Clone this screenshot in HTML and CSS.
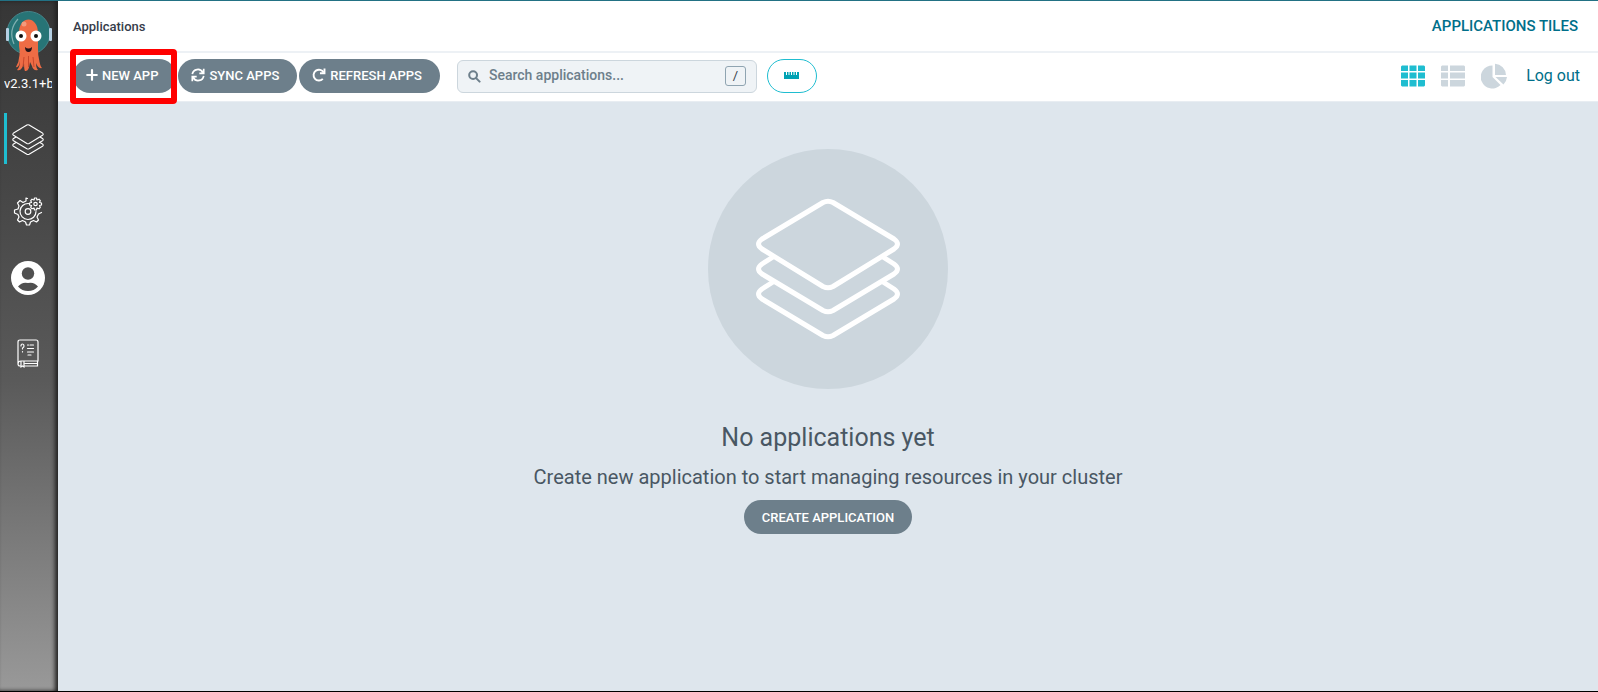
FILE: index.html
```html
<!DOCTYPE html>
<html lang="en">
<head>
<meta charset="utf-8">
<title>Applications</title>
<link rel="stylesheet" href="styles.css">
</head>
<body>
<div class="app">
  <nav class="sidebar" aria-label="Main">
    <svg class="logo" viewBox="0 0 48 62" aria-hidden="true">
      <circle cx="23.500" cy="22" r="21.500" fill="#277476" stroke="#46858b" stroke-width="1"/>
      <rect x="1" y="17" width="3" height="13" rx="1" fill="#b5d0e4"/>
      <rect x="44" y="17" width="3" height="13" rx="1" fill="#b5d0e4"/>
      <path d="M9 33Q3 19 13 8" fill="none" stroke="#7fb0b1" stroke-width="1.200"/>
      <path d="M14 22C14 4 33 4 33 22V38Q33 44 34 48Q35 55 37 57Q33 58 31 52Q31 57 33 59Q28 60 27 55L25 51Q24 61 20 60Q19 59 19 51Q17 61 12 59Q15 56 15 50Q14 57 11 56Q14 51 14.500 44Q15 40 14 35Z" fill="#ee6c45"/>
      <path d="M19 46L18 56M23.500 45V56M28 46L29 56" stroke="#c9482c" stroke-width="1" fill="none"/>
      <circle cx="19" cy="13" r="2.500" fill="#f39a7c"/>
      <circle cx="16" cy="25" r="5.500" fill="#fff"/><circle cx="31" cy="25" r="5.500" fill="#fff"/>
      <circle cx="16" cy="25" r="2" fill="#111"/><circle cx="31" cy="25" r="2" fill="#111"/>
      <path d="M20 36Q23.500 39 27 36Q27 41 23.500 41Q20 41 20 36Z" fill="#24151a"/>
    </svg>
    <div class="version">v2.3.1+b</div>
    <a class="nav-item active" href="#" aria-label="Applications">
      <svg class="nav-icon" viewBox="47 44 146 146" fill="none" stroke="#fff" stroke-width="5" stroke-linejoin="round"><path d="M115 53.500Q120 51 125 53.500L186 90Q193 95 186 100L125 137.500Q120 140 115 137.500L54 100Q47 95 54 90Z"/><path d="M65 108L54 115Q47 120 54 125L115 161.500Q120 164 125 161.500L186 125Q193 120 186 115L175 108"/><path d="M65 133L54 140Q47 145 54 150L115 186.500Q120 189 125 186.500L186 150Q193 145 186 140L175 133"/></svg>
    </a>
    <a class="nav-item" href="#" aria-label="Settings">
      <svg class="nav-icon" viewBox="-1 1 32 32" fill="none" stroke="#fff" stroke-width="1.200" stroke-linejoin="round" stroke-linecap="round"><circle cx="15" cy="18.500" r="2.800"/><path d="M15.500 10.500A8 8 0 1 0 23 18.500"/><path d="M14.500 5.500L13 5V8L10 9.500L7 7.500L4.500 10L6 13L5 16L1.500 17V20L5 21.500L6 24L4.500 27L6.500 29L9.500 27.500L12.500 29L13.500 32H16.500L17.500 29L20.500 27.500L23.500 29L25.500 27L24 24L25.500 21L28.500 19.500"/><circle cx="22.500" cy="11" r="1.700"/><path d="M21.500 5H23.500L24 7L26 6.200L27.300 7.600L26.500 9.500L28.500 10V12L26.500 12.500L27.300 14.400L26 15.800L24 15L23.500 17H21.500L21 15L19 15.800L17.700 14.400L18.500 12.500L16.500 12V10L18.500 9.500L17.700 7.600L19 6.200L21 7Z"/></svg>
    </a>
    <a class="nav-item profile" href="#" aria-label="User info">
      <svg class="nav-icon user" viewBox="0 0 34 34"><circle cx="17" cy="17" r="17" fill="#fff"/><circle cx="17" cy="12.500" r="6.200" fill="#505050"/><path d="M7 25.500Q11 20.500 17 22Q23 20.500 27 25.500Q23 30 17 30T7 25.500Z" fill="#505050"/></svg>
    </a>
    <a class="nav-item docs" href="#" aria-label="Documentation">
      <svg class="nav-icon" viewBox="0 0 32 32" fill="none" stroke="#fff" stroke-width="1.200" stroke-linecap="round"><path d="M9 29H8Q6 29 6 27V5Q6 3 8 3H24Q26 3 26 5V24H9Q6 24 6 27M12 29H25.500V24M13 26.500H25M9 24V30L10.500 29L12 30V24M15.500 8H16.500M18 8H21.500M15.500 11.500H21.500M15.500 15H21.500M16 18H19M9 9Q9 7 10.500 7T12 9Q12 10.500 10.500 11V12M10.500 14.500V15"/></svg>
    </a>
  </nav>
  <div class="page">
    <header class="topbar">
      <span class="crumb">Applications</span>
      <span class="view-title">APPLICATIONS TILES</span>
    </header>
    <div class="toolbar">
      <div class="actions">
        <div class="marked"><button class="btn" type="button"><svg class="btn-icon plus" viewBox="0 0 12 12" stroke="#fff" stroke-width="2.200" stroke-linecap="round"><path d="M6 1.200V10.800M1.200 6H10.800"/></svg>NEW APP</button></div>
        <button class="btn" type="button"><svg class="btn-icon" viewBox="0 0 14 14" fill="none" stroke="#fff" stroke-width="1.700"><path d="M1.300 6.200A5.600 5.600 0 0 1 11.800 4.500M12.700 .8V5.300H8.300M12.700 7.800A5.600 5.600 0 0 1 2.200 9.500M1.300 13.200V8.700H5.700"/></svg>SYNC APPS</button>
        <button class="btn" type="button"><svg class="btn-icon" viewBox="0 0 14 14" fill="none" stroke="#fff" stroke-width="1.900"><path d="M11.700 4.500A5.400 5.400 0 1 0 10.800 10.900"/><path d="M12.500 .6V5.200H8"/></svg>REFRESH APPS</button>
      </div>
      <div class="search">
        <svg class="search-icon" viewBox="0 0 14 14" fill="none" stroke="#6d7f8b" stroke-width="2.200" stroke-linecap="round"><circle cx="5.500" cy="5.500" r="4.200"/><path d="M9 9L12.500 12.500"/></svg>
        <input class="search-input" type="text" placeholder="Search applications..." aria-label="Search applications">
        <kbd class="key">/</kbd>
      </div>
      <button class="health" type="button" aria-label="Health status bar"><svg class="ruler" viewBox="0 0 15 8"><path d="M0 1H2V4H3V1H4.500V4H5.500V1H7V4H8V1H9.500V4H10.500V1H12V4H13V1H15V8H0Z" fill="#00a2b3"/></svg></button>
      <div class="views">
        <button class="view active" type="button" aria-label="Tiles"><svg class="view-icon" viewBox="0 0 24 24" fill="currentColor"><path d="M1 1.500H7V7H0V2.500ZM8.500 1.500H15.500V7H8.500ZM17 1.500H23L24 2.500V7H17ZM0 8.500H7V14.500H0ZM8.500 8.500H15.500V14.500H8.500ZM17 8.500H24V14.500H17ZM0 16H7V22.500H1L0 21.500ZM8.500 16H15.500V22.500H8.500ZM17 16H24V21.500L23 22.500H17Z"/></svg></button>
        <button class="view" type="button" aria-label="List"><svg class="view-icon" viewBox="0 0 24 24" fill="currentColor"><path d="M1 1.500H7V7H0V2.500ZM9 1.500H23L24 2.500V7H9ZM0 8.500H7V14.500H0ZM9 8.500H24V14.500H9ZM0 16H7V22.500H1L0 21.500ZM9 16H24V21.500L23 22.500H9Z"/></svg></button>
        <button class="view" type="button" aria-label="Summary"><svg class="view-icon pie" viewBox="0 0 26 26" fill="currentColor"><path d="M11.500 2.500V14L19.500 22A11.500 11.500 0 1 1 11.500 2.500ZM14 .8A11.500 11.500 0 0 1 25 12H14ZM14.500 14H26Q25.500 18.500 22.500 21.500Z"/></svg></button>
        <a class="logout" href="#">Log out</a>
      </div>
    </div>
    <main class="empty">
      <svg class="empty-icon" viewBox="0 0 240 240" fill="none" stroke="#fff" stroke-width="5" stroke-linejoin="round"><circle cx="120" cy="120" r="120" fill="#ccd6dd" stroke="none"/><path d="M115 53.500Q120 51 125 53.500L186 90Q193 95 186 100L125 137.500Q120 140 115 137.500L54 100Q47 95 54 90Z"/><path d="M65 108L54 115Q47 120 54 125L115 161.500Q120 164 125 161.500L186 125Q193 120 186 115L175 108"/><path d="M65 133L54 140Q47 145 54 150L115 186.500Q120 189 125 186.500L186 150Q193 145 186 140L175 133"/></svg>
      <h1 class="empty-title">No applications yet</h1>
      <p class="empty-text">Create new application to start managing resources in your cluster</p>
      <button class="btn create" type="button">CREATE APPLICATION</button>
    </main>
  </div>
</div>
</body>
</html>
```

FILE: styles.css
```css
* { box-sizing: border-box; }
body { margin: 0; font-family: Roboto, sans-serif; color: #495763; background: #dee6ed; }
button, input { font-family: inherit; }
.app { display: flex; min-height: 100vh; border-top: 1px solid #227184; border-bottom: 1px solid #000; }
.sidebar { width: 58px; flex: none; display: flex; flex-direction: column; padding-top: 10px; background: linear-gradient(#363636, #484848 30%, #5a5a5a 55%, #999); box-shadow: inset -3px 0 4px #222; }
.logo { width: 48px; height: 62px; margin-left: 5px; }
.version { margin: 2px 6px 0 4px; overflow: hidden; white-space: nowrap; color: #fff; font-size: 13px; line-height: 18px; }
.nav-item { display: flex; align-items: center; height: 51px; margin: 20px 0 0 4px; padding-left: 5px; border-left: 3px solid transparent; }
.nav-item.active { border-color: #1fbdd0; }
.nav-icon { width: 32px; height: 32px; }
.nav-item.profile { margin-top: 17px; padding-left: 4px; }
.nav-item.docs { margin-top: 24px; }
.user { width: 34px; height: 34px; }
.page { flex: 1; display: flex; flex-direction: column; min-width: 0; }
.topbar { display: flex; align-items: center; justify-content: space-between; height: 52px; padding: 0 20px 0 15px; background: #fff; border-bottom: 2px solid #edf1f5; }
.crumb { color: #363c4a; font-size: 13px; font-weight: 500; }
.view-title { color: #006f8a; font-size: 15px; font-weight: 500; }
.toolbar { display: flex; align-items: center; height: 49px; padding: 0 18px 2px 15px; background: #fff; border-bottom: 1px solid #e8edf2; }
.actions { display: flex; gap: 2px; }
.btn { display: flex; align-items: center; gap: 4px; height: 34px; padding: 0 18px 2px 13px; border: 0; border-radius: 17px; background: #6d7f8b; color: #fff; font-size: 13px; font-weight: 500; white-space: nowrap; }
.btn-icon { width: 14px; height: 14px; }
.plus { width: 12px; height: 12px; }
.marked { position: relative; }
.marked::after { content: ""; position: absolute; inset: -10px -1px -11px -3px; border: 6px solid #f00; border-radius: 4px; }
.search { display: flex; align-items: center; width: 300px; height: 33px; margin-left: 17px; padding: 0 10px; border: 1px solid #ccd6dd; border-radius: 6px; background: #eff3f6; }
.search-icon { width: 13px; height: 13px; }
.search-input { flex: 1; min-width: 0; padding: 0 0 2px 8px; border: 0; outline: 0; background: none; font-size: 14px; font-weight: 500; color: #6d7f8b; }
.search-input::placeholder { color: #6d7f8b; opacity: 1; }
.key { width: 21px; height: 20px; border: 1px solid #8fa4b1; border-radius: 3px; color: #363c4a; font: 13px/18px Roboto, sans-serif; text-align: center; }
.health { display: flex; align-items: center; justify-content: center; width: 50px; height: 34px; margin-left: 10px; padding: 0 0 2px; border: 1px solid #1fbdd0; border-radius: 17px; background: #fff; }
.ruler { width: 15px; height: 8px; }
.views { display: flex; align-items: center; gap: 16px; margin-left: auto; }
.view { display: flex; padding: 0; border: 0; background: none; color: #ccd6dd; }
.view.active { color: #1fbdd0; }
.view-icon { width: 24px; height: 24px; }
.pie { width: 26px; height: 26px; }
.logout { margin-left: 3px; padding-bottom: 2px; color: #006f8a; font-size: 16px; text-decoration: none; }
.empty { flex: 1; display: flex; flex-direction: column; align-items: center; padding-top: 47px; }
.empty-icon { width: 240px; height: 240px; }
.empty-title { margin: 33px 0 0; font-size: 25px; font-weight: 400; line-height: 32px; }
.empty-text { margin: 7px 0; font-size: 20px; line-height: 32px; }
.create { padding: 0 18px; }
```
